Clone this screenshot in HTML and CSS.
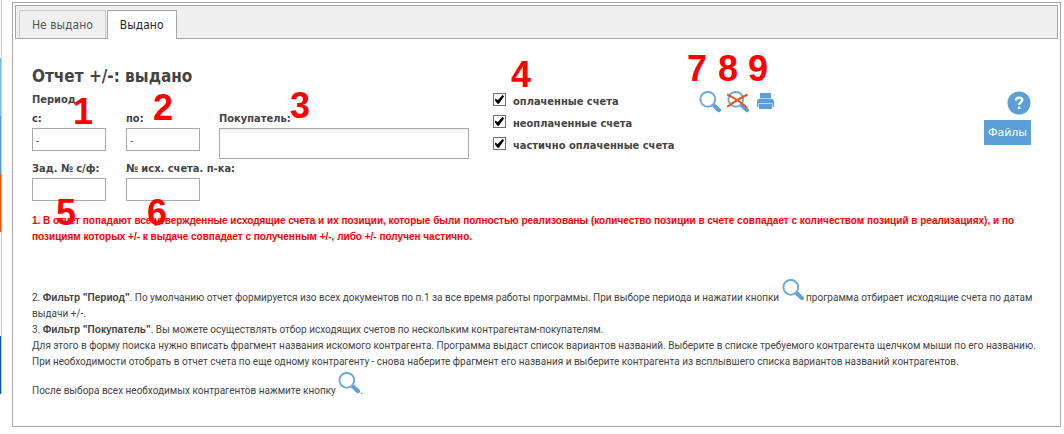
FILE: index.html
```html
<!DOCTYPE html>
<html lang="ru">
<head>
<meta charset="utf-8">
<title>Отчет +/-: выдано</title>
<link rel="stylesheet" href="styles.css">
</head>
<body>
<svg class="defs" aria-hidden="true">
  <symbol id="search" viewBox="0 0 22 22">
    <path d="M15 14.5 L20 19.2" fill="none" stroke="#5b9fd6" stroke-width="4" stroke-linecap="round"/>
    <circle cx="8.8" cy="8.3" r="7.4" fill="#fff" stroke="#6fabdc" stroke-width="2"/>
  </symbol>
</svg>
<div class="page">
  <div class="rail" aria-hidden="true">
    <span class="gap-top"></span><span class="light"></span><span class="mid"></span><span class="orange"></span><span class="gap-low"></span><span class="dark"></span>
  </div>
  <main class="panel">
    <nav class="tabs">
      <button class="tab" type="button">Не выдано</button>
      <button class="tab active" type="button">Выдано</button>
    </nav>
    <div class="content">
      <h1>Отчет +/-: выдано</h1>
      <form class="filters">
        <div class="fields">
          <div class="caption">Период</div>
          <div class="field"><label for="from">с:</label><input id="from" type="text" value="-"></div>
          <div class="field"><label for="to">по:</label><input id="to" type="text" value="-"></div>
          <div class="field"><label for="buyer">Покупатель:</label><input id="buyer" class="buyer" type="text"></div>
          <div class="field"><label for="task">Зад. № с/ф:</label><input id="task" type="text"></div>
          <div class="field wide"><label for="invoice">№ исх. счета. п-ка:</label><input id="invoice" type="text"></div>
        </div>
        <div class="checks">
          <label><input type="checkbox" checked><span>оплаченные счета</span></label>
          <label><input type="checkbox" checked><span>неоплаченные счета</span></label>
          <label><input type="checkbox" checked><span>частично оплаченные счета</span></label>
        </div>
        <div class="tools">
          <button type="button" aria-label="Найти"><svg class="icon"><use href="#search"/></svg></button>
          <button type="button" aria-label="Сбросить"><svg class="icon" viewBox="0 0 22 22"><use href="#search" width="22" height="22"/><path d="M0 3.5 C7 7 14 11 20 17 M20.5 3.5 C13 7 7 11 0 16" fill="none" stroke="#e9551c" stroke-width="2"/></svg></button>
          <button type="button" aria-label="Печать"><svg class="icon" viewBox="0 0 22 22"><path d="M5 2h11v5H5z" fill="#5b9fd6"/><path d="M2 9.500L3.500 8h14L19 9.500V16H2z" fill="#5b9fd6"/><path d="M4 12.500h13V18H4z" fill="#5b9fd6"/><path d="M3.500 16V12.500h14V16 M4.500 7.500h12" fill="none" stroke="#b5d3ee"/></svg></button>
        </div>
        <div class="side">
          <button class="help" type="button" aria-label="Справка"><svg viewBox="0 0 24 24"><circle cx="12" cy="12" r="11.5" fill="#5b9fd6"/><path d="M8.900 9.400 C8.900 5.600 15.300 5.800 15.300 9.100 C15.300 11.400 12.200 11.500 12.100 14" fill="none" stroke="#fff" stroke-width="2.300"/><path d="M10.900 15.600h2.500v2.400h-2.500z" fill="#fff"/></svg></button>
          <button class="files" type="button">Файлы</button>
        </div>
      </form>
      <p class="warning">1. В отчет попадают все утвержденные исходящие счета и их позиции, которые были полностью реализованы (количество позиции в счете совпадает с количеством позиций в реализациях), и по позициям которых +/- к выдаче совпадает с полученным +/-, либо +/- получен частично.</p>
      <p class="notes">2. <b>Фильтр "Период"</b>. По умолчанию отчет формируется изо всех документов по п.1 за все время работы программы. При выборе периода и нажатии кнопки <svg class="icon"><use href="#search"/></svg> программа отбирает исходящие счета по датам выдачи +/-.<br>
      3. <b>Фильтр "Покупатель"</b>. Вы можете осуществлять отбор исходящих счетов по нескольким контрагентам-покупателям.<br>
      Для этого в форму поиска нужно вписать фрагмент названия искомого контрагента. Программа выдаст список вариантов названий. Выберите в списке требуемого контрагента щелчком мыши по его названию.<br>
      При необходимости отобрать в отчет счета по еще одному контрагенту - снова наберите фрагмент его названия и выберите контрагента из всплывшего списка вариантов названий контрагентов.</p>
      <p class="after">После выбора всех необходимых контрагентов нажмите кнопку <svg class="icon"><use href="#search"/></svg>.</p>
    </div>
  </main>
  <span class="mark m1">1</span><span class="mark m2">2</span><span class="mark m3">3</span>
  <span class="mark m4">4</span><span class="mark m5">5</span><span class="mark m6">6</span>
  <span class="mark m7">7</span><span class="mark m8">8</span><span class="mark m9">9</span>
</div>
</body>
</html>
```
FILE: styles.css
```css
* { box-sizing: border-box; }
body {
  margin: 0;
  background: #fff;
  color: #444;
  font: 10px/16px Roboto, "Noto Sans", sans-serif;
}
button { margin: 0; padding: 0; border: 0; background: none; font: inherit; color: inherit; }
h1, p { margin: 0; }
.defs { position: absolute; width: 0; height: 0; }
.page { position: relative; display: flex; align-items: flex-start; gap: 10px; padding-right: 3px; }

.rail { display: flex; flex-direction: column; flex: none; width: 2px; border-right: 1px solid #ccc; }
.rail span { height: 58px; }
.rail .gap-low { height: 104px; }
.rail .light { background: #7fb9ee; }
.rail .mid { background: #5b9bd5; }
.rail .orange { background: #ff5000; }
.rail .dark { background: #0a5aa8; }

.panel { flex: 1; min-width: 0; margin-top: 2px; padding: 2px; border: 1px solid #a6a6a6; }
.tabs { display: flex; gap: 1px; height: 34px; padding: 4px 3px 0; background: #f0f0f0; border: 1px solid #a6a6a6; }
.tab {
  padding: 0 12px;
  border: 1px solid #ccc;
  border-bottom: 0;
  color: #555;
  font: 12px "DejaVu Sans Condensed", "DejaVu Sans", sans-serif;
}
.tab.active { margin-bottom: -1px; background: #fff; border-color: #a6a6a6; color: #222; }

.content { padding: 25px 17px 25px; }
h1, .filters { font-family: "DejaVu Sans Condensed", "DejaVu Sans", sans-serif; font-weight: 700; }
h1 { font-size: 17px; line-height: 24px; }

.filters { display: flex; align-items: flex-start; padding-top: 3px; font-size: 11px; }
.fields { display: grid; grid-template-columns: 94px 93px 250px; row-gap: 1px; }
.caption { grid-column: 1 / -1; padding-top: 1px; padding-bottom: 1px; }
.field { display: flex; flex-direction: column; align-items: flex-start; gap: 1px; padding-top: 1px; white-space: nowrap; }
.field.wide { grid-column: 2 / -1; }
.field input {
  width: 74px;
  height: 23px;
  padding: 0 3px;
  border: 1px solid #a9a9b0;
  border-radius: 0;
  background: #fff;
  color: #444;
  font: 10px "Open Sans", sans-serif;
}
.field .buyer { width: 250px; height: 31px; border-color: #aaa; background: linear-gradient(#eee, #fff 6px); }

.checks { display: flex; flex-direction: column; gap: 6px; margin-left: 24px; padding-top: 2px; }
.checks label { display: flex; gap: 7px; white-space: nowrap; }
.checks span { padding-top: 1px; line-height: 15px; }
.checks input {
  appearance: none;
  flex: none;
  display: grid;
  width: 13px;
  height: 13px;
  margin: 0;
  border: 1px solid #707070;
  background: #fff;
}
.checks input:checked::before { content: ""; background: #000; clip-path: polygon(10% 40%, 35% 55%, 78% 10%, 92% 20%, 45% 88%, 32% 88%, 10% 62%); }

.tools { display: flex; gap: 6px; margin-left: 24px; }
.tools button, .tools svg { display: block; }
.icon { width: 22px; height: 22px; }
.side { display: flex; flex-direction: column; align-items: flex-end; gap: 5px; margin-left: auto; padding-right: 10px; }
.help, .help svg { display: block; width: 24px; height: 24px; }
.files { width: 47px; height: 25px; background: #5b9fd6; color: #fff; font: 11px "DejaVu Sans", sans-serif; }

.warning { padding-top: 12px; color: #f00; font-family: "Liberation Sans", Arial, sans-serif; font-weight: 700; }
.notes { padding-top: 34px; }
.notes b { font-family: "Liberation Sans", Arial, sans-serif; }
.after { padding-top: 2px; }

.mark { position: absolute; color: #f00; font: bold 36px/26px "Liberation Sans", Arial, sans-serif; }
.m1 { left: 73px; top: 99px; }
.m2 { left: 153px; top: 95px; }
.m3 { left: 290px; top: 93px; }
.m4 { left: 511px; top: 62px; }
.m5 { left: 56px; top: 200px; }
.m6 { left: 147px; top: 200px; }
.m7 { left: 687px; top: 56px; }
.m8 { left: 718px; top: 56px; }
.m9 { left: 748px; top: 56px; }
```
